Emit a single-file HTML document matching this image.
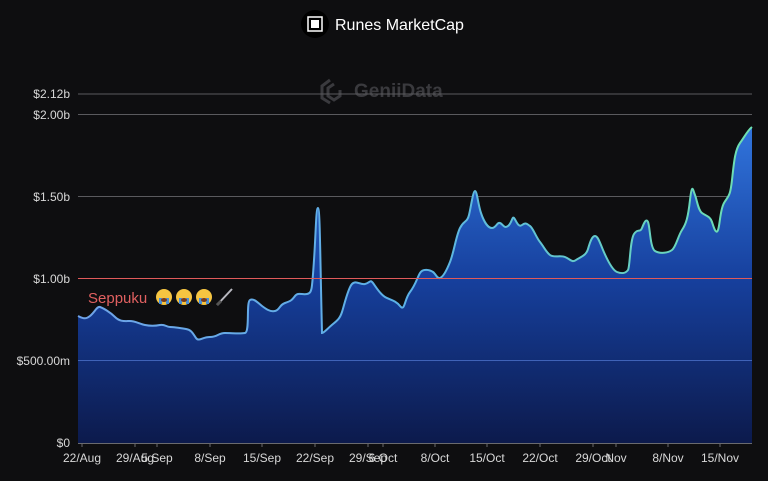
<!DOCTYPE html>
<html><head><meta charset="utf-8"><style>
html,body{margin:0;padding:0;background:#0e0e10;width:768px;height:481px;overflow:hidden;font-family:"Liberation Sans",sans-serif}
</style></head><body>
<svg width="768" height="481" viewBox="0 0 768 481" xmlns="http://www.w3.org/2000/svg" style="position:absolute;left:0;top:0">
<defs>
<linearGradient id="g" x1="0" y1="120" x2="0" y2="443" gradientUnits="userSpaceOnUse">
<stop offset="0" stop-color="#3277e0"/><stop offset="0.5" stop-color="#163f9c"/><stop offset="1" stop-color="#0c1a4c"/>
</linearGradient>
<linearGradient id="l" x1="78" y1="0" x2="752" y2="0" gradientUnits="userSpaceOnUse">
<stop offset="0" stop-color="#6fa3e8"/><stop offset="0.5" stop-color="#5bb2e6"/><stop offset="1" stop-color="#6ee0b0"/>
</linearGradient>
</defs>
<rect width="768" height="481" fill="#0e0e10"/>
<circle cx="315" cy="24" r="14" fill="#000"/>
<rect x="308" y="17" width="14" height="14" fill="none" stroke="#fff" stroke-width="1.5"/>
<rect x="311" y="20" width="8" height="8" fill="#fff"/>
<text x="335" y="30" fill="#fff" font-size="16">Runes MarketCap</text>
<text x="354" y="97" fill="#3a3a3e" font-size="19" font-weight="bold">GeniiData</text>
<path d="M330 80 l-8 6 v12 l8 5 M334 84 l-6 4 v8 l6 4 l6-4 v-6" fill="none" stroke="#3a3a3e" stroke-width="3"/>
<g stroke="#5a5a5e" stroke-width="1">
<line x1="78" y1="94" x2="752" y2="94"/>
<line x1="78" y1="114.5" x2="752" y2="114.5"/>
<line x1="78" y1="196.5" x2="752" y2="196.5"/>
</g>
<g fill="#d8d8d8" font-size="12" text-anchor="end">
<text x="70" y="98">$2.12b</text><text x="70" y="119">$2.00b</text><text x="70" y="201">$1.50b</text>
<text x="70" y="283">$1.00b</text><text x="70" y="365">$500.00m</text><text x="70" y="447">$0</text>
</g>
<path d="M78,316 C82,318 85,320 90,316 S97,306 100,307 S110,312 115,317 S125,321 130,321 S140,324 145,325 S155,326 160,325 S166,327 170,327 S180,328 186,329 S193,334 196,338 S202,337 210,337 S218,333 225,333 S240,334 245,333 S246,302 250,300 S258,303 262,306 S270,312 275,311 S279,305 285,303 S292,300 295,296 S302,295 307,294 S312,290 314,260 S316,208 318,208 S320,250 322,333 C324,333 328,328 333,324 S340,318 342,312 S348,288 352,284 S360,285 365,284 S370,279 373,283 S380,294 385,297 S395,300 400,306 S404,300 410,292 S417,278 420,273 S430,270 433,272 S437,279 440,278 S446,272 450,262 S456,236 460,228 S467,223 469,215 S473,191 475,191 S478,204 481,213 S488,228 492,228 S497,222 500,223 S504,229 508,226 S512,216 514,218 S518,228 522,225 S527,224 530,226 S536,237 540,242 S546,252 550,255 S560,255 565,257 S572,263 576,260 S586,256 588,249 S592,236 595,236 S600,243 603,250 S612,270 617,272 S626,273 628,270 S630,240 634,234 S640,233 642,228 S646,218 648,222 S650,248 655,251 S668,253 672,250 S678,236 682,230 S688,218 690,200 S693,190 695,195 S698,210 702,213 S710,216 712,222 S716,235 718,230 S720,210 724,203 S730,198 732,180 S735,150 740,143 S748,130 752,127 L752,443 L78,443 Z" fill="url(#g)"/>
<path d="M78,316 C82,318 85,320 90,316 S97,306 100,307 S110,312 115,317 S125,321 130,321 S140,324 145,325 S155,326 160,325 S166,327 170,327 S180,328 186,329 S193,334 196,338 S202,337 210,337 S218,333 225,333 S240,334 245,333 S246,302 250,300 S258,303 262,306 S270,312 275,311 S279,305 285,303 S292,300 295,296 S302,295 307,294 S312,290 314,260 S316,208 318,208 S320,250 322,333 C324,333 328,328 333,324 S340,318 342,312 S348,288 352,284 S360,285 365,284 S370,279 373,283 S380,294 385,297 S395,300 400,306 S404,300 410,292 S417,278 420,273 S430,270 433,272 S437,279 440,278 S446,272 450,262 S456,236 460,228 S467,223 469,215 S473,191 475,191 S478,204 481,213 S488,228 492,228 S497,222 500,223 S504,229 508,226 S512,216 514,218 S518,228 522,225 S527,224 530,226 S536,237 540,242 S546,252 550,255 S560,255 565,257 S572,263 576,260 S586,256 588,249 S592,236 595,236 S600,243 603,250 S612,270 617,272 S626,273 628,270 S630,240 634,234 S640,233 642,228 S646,218 648,222 S650,248 655,251 S668,253 672,250 S678,236 682,230 S688,218 690,200 S693,190 695,195 S698,210 702,213 S710,216 712,222 S716,235 718,230 S720,210 724,203 S730,198 732,180 S735,150 740,143 S748,130 752,127" fill="none" stroke="url(#l)" stroke-width="2"/>
<line x1="78" y1="360.5" x2="752" y2="360.5" stroke="#3f63b8" stroke-width="1"/>
<line x1="78" y1="278.5" x2="752" y2="278.5" stroke="#e05a5a" stroke-width="1"/>
<line x1="78" y1="443.5" x2="752" y2="443.5" stroke="#6a6a6e" stroke-width="1"/>
<g stroke="#6a6a6e">
<line x1="82" y1="443" x2="82" y2="447"/><line x1="135" y1="443" x2="135" y2="447"/><line x1="157" y1="443" x2="157" y2="447"/><line x1="210" y1="443" x2="210" y2="447"/><line x1="262" y1="443" x2="262" y2="447"/><line x1="315" y1="443" x2="315" y2="447"/><line x1="368" y1="443" x2="368" y2="447"/><line x1="383" y1="443" x2="383" y2="447"/><line x1="435" y1="443" x2="435" y2="447"/><line x1="487" y1="443" x2="487" y2="447"/><line x1="540" y1="443" x2="540" y2="447"/><line x1="593" y1="443" x2="593" y2="447"/><line x1="616" y1="443" x2="616" y2="447"/><line x1="668" y1="443" x2="668" y2="447"/><line x1="720" y1="443" x2="720" y2="447"/>
</g>
<g fill="#d8d8d8" font-size="12" text-anchor="middle">
<text x="82" y="462">22/Aug</text><text x="135" y="462">29/Aug</text><text x="157" y="462">5 Sep</text><text x="210" y="462">8/Sep</text><text x="262" y="462">15/Sep</text><text x="315" y="462">22/Sep</text><text x="368" y="462">29/Sep</text><text x="383" y="462">6 Oct</text><text x="435" y="462">8/Oct</text><text x="487" y="462">15/Oct</text><text x="540" y="462">22/Oct</text><text x="593" y="462">29/Oct</text><text x="616" y="462">Nov</text><text x="668" y="462">8/Nov</text><text x="720" y="462">15/Nov</text>
</g>
<text x="88" y="303" fill="#e06060" font-size="15">Seppuku</text>
<g>
<circle cx="164" cy="297" r="8" fill="#f5c542"/><circle cx="184" cy="297" r="8" fill="#f5c542"/><circle cx="204" cy="297" r="8" fill="#f5c542"/>
<g fill="#4a90d9"><rect x="159" y="298" width="3" height="6"/><rect x="166" y="298" width="3" height="6"/><rect x="179" y="298" width="3" height="6"/><rect x="186" y="298" width="3" height="6"/><rect x="199" y="298" width="3" height="6"/><rect x="206" y="298" width="3" height="6"/></g>
<g fill="#7a3a1a"><ellipse cx="164" cy="300" rx="3" ry="2"/><ellipse cx="184" cy="300" rx="3" ry="2"/><ellipse cx="204" cy="300" rx="3" ry="2"/></g>
<line x1="217" y1="305" x2="232" y2="289" stroke="#b8b8c0" stroke-width="2"/>
<line x1="217" y1="305" x2="221" y2="301" stroke="#555" stroke-width="3"/>
</g>
</svg>
</body></html>
